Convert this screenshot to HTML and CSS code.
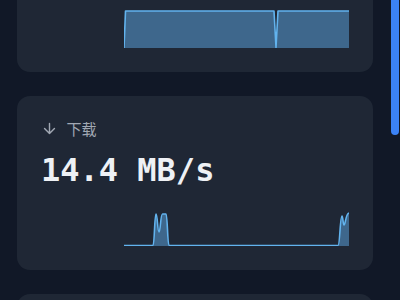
FILE: index.html
```html
<!DOCTYPE html>
<html lang="zh">
<head>
<meta charset="utf-8">
<link rel="stylesheet" href="styles.css">
</head>
<body>
<div class="app">
  <div class="scroller" id="scroller">
    <div class="list">
      <section class="card">
        <svg class="chart" viewBox="0 0 225 38" preserveAspectRatio="none">
          <path class="area" d="M0 38 L1.5 1 L150 1 L152 38 L154 1 L225 1 L225 38 Z"/>
          <path class="line" d="M0 38 L1.5 1 L150 1 L152 37.5 L154 1 L225 1"/>
        </svg>
      </section>
      <section class="card">
        <div class="label">
          <svg class="icon" viewBox="0 0 24 24" width="17" height="17"><path d="M12 5v14M19 12l-7 7-7-7"/></svg>
          <span>下载</span>
        </div>
        <div class="value">14.4 MB/s</div>
        <svg class="chart" viewBox="0 0 225 38" preserveAspectRatio="none">
          <path class="area" d="M0 38 L0 37.5 L29 37.5 C30.5 37.5 30.5 6 32 6 C33.5 6 33.5 24 35 24 C36.5 24 36.5 6 38.5 6 L42 6 C43.5 6 43.5 37.5 45 37.5 L214 37.5 C216 37.5 216 8 218 8 C219 8 219 17 220 17 C221.5 17 221.5 6 225 5 L225 38 Z"/>
          <path class="line" d="M0 37.5 L29 37.5 C30.5 37.5 30.5 6 32 6 C33.5 6 33.5 24 35 24 C36.5 24 36.5 6 38.5 6 L42 6 C43.5 6 43.5 37.5 45 37.5 L214 37.5 C216 37.5 216 8 218 8 C219 8 219 17 220 17 C221.5 17 221.5 6 225 5"/>
        </svg>
      </section>
      <section class="card">
        <div class="chart-box"></div>
      </section>
    </div>
  </div>
  <div class="rail"><div class="thumb"></div></div>
</div>
<script src="app.js"></script>
</body>
</html>
```
FILE: styles.css
```css
* { box-sizing: border-box; }
html, body { margin: 0; padding: 0; }
body {
  background: #111827;
  font-family: "Noto Sans", "Noto Sans CJK SC", sans-serif;
  color: #e5e7eb;
}
.app {
  display: flex;
  width: 400px;
  height: 300px;
  overflow: hidden;
}
.scroller {
  flex: 1;
  height: 300px;
  overflow-y: auto;
  scrollbar-width: none;
}
.scroller::-webkit-scrollbar { display: none; }
.list {
  display: flex;
  flex-direction: column;
  gap: 24px;
  padding: 16px 17px;
}
.card {
  background: #1f2735;
  border-radius: 13px;
  padding: 24px;
  display: flex;
  flex-direction: column;
  min-height: 174px;
}
.label {
  display: flex;
  align-items: center;
  gap: 9px;
  height: 16px;
  font-size: 15px;
  color: #a1a8b3;
  font-family: "Noto Sans CJK SC", sans-serif;
}
.icon {
  fill: none;
  stroke: #a1a8b3;
  stroke-width: 2;
  stroke-linecap: round;
  stroke-linejoin: round;
  margin-left: -0.5px;
}
.value {
  margin-top: 16px;
  font-family: "DejaVu Sans Mono", monospace;
  font-weight: bold;
  font-size: 32px;
  line-height: 36px;
  color: #eef1f5;
}
.chart, .chart-box {
  margin-top: auto;
  align-self: flex-end;
  width: 225px;
  height: 38px;
  display: block;
  flex: none;
}
.area { fill: #64b5f6; fill-opacity: 0.45; stroke: none; }
.line { fill: none; stroke: #62b3ee; stroke-width: 1.6; stroke-linejoin: round; vector-effect: non-scaling-stroke; }
.rail {
  width: 10px;
  height: 300px;
  padding: 0 1px;
}
.thumb {
  height: 135px;
  background: #3b82f6;
  border-radius: 0 0 4px 4px;
}
```
FILE: app.js
```js
document.getElementById('scroller').scrollTop = 118;
```
